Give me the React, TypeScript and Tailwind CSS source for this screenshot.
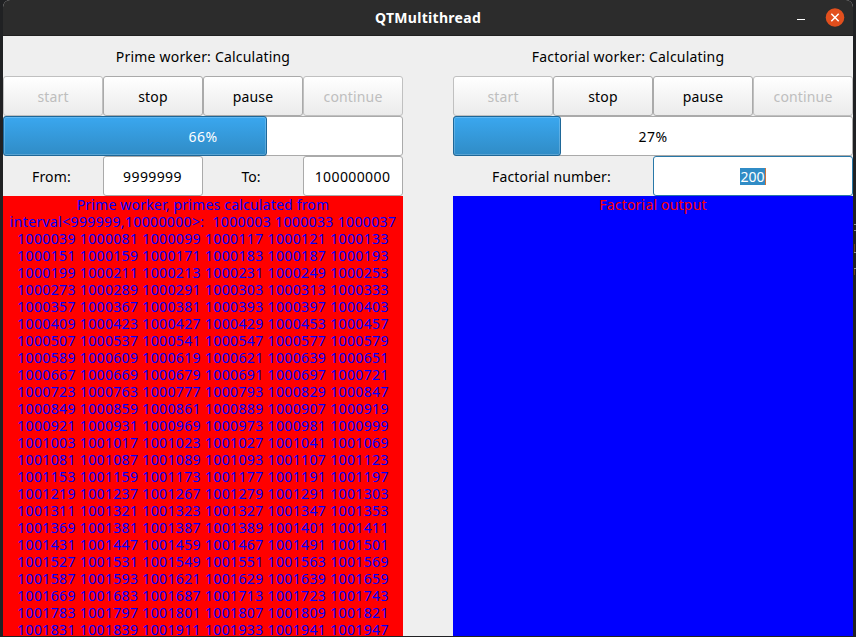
import type { ReactNode } from "react";

const primes = [
  "1000039 1000081 1000099 1000117 1000121 1000133",
  "1000151 1000159 1000171 1000183 1000187 1000193",
  "1000199 1000211 1000213 1000231 1000249 1000253",
  "1000273 1000289 1000291 1000303 1000313 1000333",
  "1000357 1000367 1000381 1000393 1000397 1000403",
  "1000409 1000423 1000427 1000429 1000453 1000457",
  "1000507 1000537 1000541 1000547 1000577 1000579",
  "1000589 1000609 1000619 1000621 1000639 1000651",
  "1000667 1000669 1000679 1000691 1000697 1000721",
  "1000723 1000763 1000777 1000793 1000829 1000847",
  "1000849 1000859 1000861 1000889 1000907 1000919",
  "1000921 1000931 1000969 1000973 1000981 1000999",
  "1001003 1001017 1001023 1001027 1001041 1001069",
  "1001081 1001087 1001089 1001093 1001107 1001123",
  "1001153 1001159 1001173 1001177 1001191 1001197",
  "1001219 1001237 1001267 1001279 1001291 1001303",
  "1001311 1001321 1001323 1001327 1001347 1001353",
  "1001369 1001381 1001387 1001389 1001401 1001411",
  "1001431 1001447 1001459 1001467 1001491 1001501",
  "1001527 1001531 1001549 1001551 1001563 1001569",
  "1001587 1001593 1001621 1001629 1001639 1001659",
  "1001669 1001683 1001687 1001713 1001723 1001743",
  "1001783 1001797 1001801 1001807 1001809 1001821",
  "1001831 1001839 1001911 1001933 1001941 1001947",
];

function Button({ children, disabled }: { children: ReactNode; disabled?: boolean }) {
  return (
    <button
      disabled={disabled}
      className="h-10 w-[100px] rounded-[3px] border border-[#aaaaaa] bg-linear-to-b from-white to-[#ebebeb] pt-px tracking-[0.15px] text-black disabled:border-[#c0c0c0] disabled:text-[#bebebe]"
    >
      {children}
    </button>
  );
}

function Buttons() {
  return (
    <div className="flex h-10">
      <Button disabled>start</Button>
      <Button>stop</Button>
      <Button>pause</Button>
      <Button disabled>continue</Button>
    </div>
  );
}

function Progress({ value, fill, light }: { value: string; fill: string; light?: boolean }) {
  return (
    <div className="relative h-10 rounded-[3px] border border-[#aaaaaa] bg-white">
      <div
        className={`-mt-px -ml-px h-10 rounded-[3px] border border-[#1e6798] bg-linear-to-b from-[#3aa7ef] to-[#308cc6] inset-ring inset-ring-white/20 ${fill}`}
      />
      <span
        className={`absolute inset-0 flex items-center justify-center tracking-[0.4px] ${light ? "text-white" : "text-black"}`}
      >
        {value}
      </span>
    </div>
  );
}

function Field({ children }: { children: ReactNode }) {
  return (
    <div className="flex h-10 w-[100px] items-center justify-center rounded-[3px] border border-[#aaaaaa] bg-white pr-px tracking-[0.4px]">
      {children}
    </div>
  );
}

export default function App() {
  return (
    <div className="relative h-[637px] w-[856px] overflow-hidden bg-[#202123] font-['Noto_Sans',sans-serif] text-[14px] leading-[17px] text-black">
      <div className="ml-[3px] flex h-[636px] w-[850px] flex-col overflow-hidden rounded-t-[7px] bg-[#efefef]">
        <header className="flex h-9 items-center border-b border-[#202020] bg-[#2c2c2c] text-white">
          <h1 className="ml-[90px] flex-1 text-center text-[14px] font-bold tracking-[0.3px]">QTMultithread</h1>
          <div className="flex w-[90px] items-center">
            <div className="ml-[34px] mt-[3px] h-px w-2 bg-white" />
            <svg className="ml-5" width="20" height="20" viewBox="0 0 20 20">
              <circle cx="10" cy="9.5" r="9.3" fill="#e24f1d" />
              <path d="M6.3 5.8 13.7 13.2M13.7 5.8 6.3 13.2" stroke="white" strokeWidth="1.5" />
            </svg>
          </div>
        </header>
        <main className="flex flex-1 gap-[50px]">
          <section className="flex w-[400px] flex-col">
            <div className="flex h-10 items-center justify-center tracking-[0.2px]">Prime worker: Calculating</div>
            <Buttons />
            <Progress value="66%" fill="w-[264px]" light />
            <div className="flex h-10 items-center text-center">
              <label className="w-[100px] pr-[3px] tracking-[0.2px]">From:</label>
              <Field>9999999</Field>
              <label className="w-[100px] pr-1">To:</label>
              <Field>100000000</Field>
            </div>
            <div className="h-[440px] overflow-hidden bg-[#ff0000] text-center tracking-[0.365px] whitespace-pre text-[#0000ff]">
              <p className="tracking-[0.2px]">Prime worker, primes calculated from</p>
              <p>{"interval<999999,10000000>:  1000003 1000033 1000037"}</p>
              {primes.map((line) => (
                <p key={line}>{line}</p>
              ))}
            </div>
          </section>
          <section className="flex w-[400px] flex-col">
            <div className="flex h-10 items-center justify-center pr-[50px] tracking-[0.2px]">
              Factorial worker: Calculating
            </div>
            <Buttons />
            <Progress value="27%" fill="w-[108px]" />
            <div className="flex h-10 items-center text-center">
              <label className="w-[200px] pr-[3px] tracking-[0.15px]">Factorial number:</label>
              <div className="flex h-10 w-[200px] items-center justify-center rounded-[3px] border border-[#2878a8] bg-white">
                <span className="border-r border-[#cf7339] bg-[#308cc6] text-white">200</span>
              </div>
            </div>
            <div className="h-[440px] bg-[#0000ff] text-center tracking-[0.2px] text-[#ff0000]">Factorial output</div>
          </section>
        </main>
      </div>
      {/* Slivers of the window behind, visible past the right edge */}
      <svg className="absolute top-[220px] right-0" width="2" height="60" viewBox="0 0 2 60">
        <path d="M0 4.5h2M0 10.5h2M0 32.5h2M0 48.5h2" stroke="#8d9294" />
        <path d="M.5 24v8M.5 49v6" stroke="#68401f" />
      </svg>
    </div>
  );
}
